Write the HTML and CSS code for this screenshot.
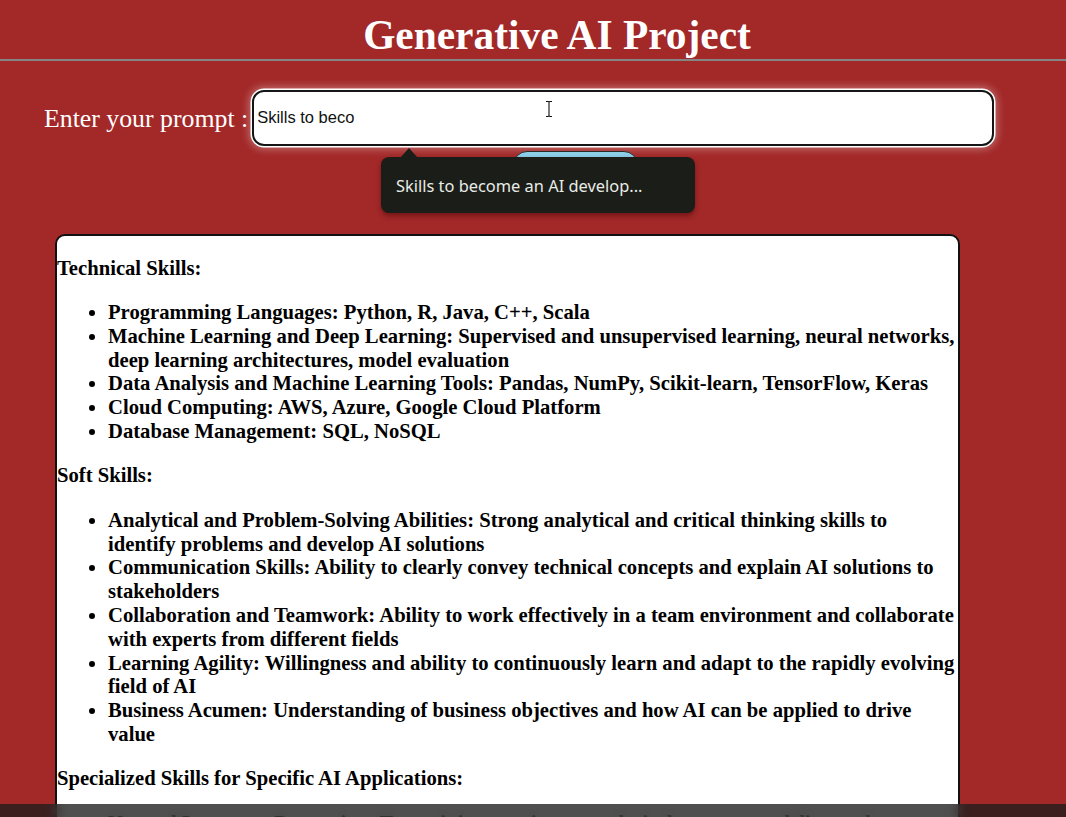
FILE: index.html
```html
<!DOCTYPE html>
<html lang="en">
<head>
<meta charset="utf-8">
<title>Generative AI Project</title>
<link rel="stylesheet" href="styles.css">
</head>
<body>
<header class="page-header">
  <h1 class="title">Generative AI Project</h1>
</header>
<main class="main">
  <form class="prompt-form">
    <div class="prompt-row">
      <label class="prompt-label" for="prompt">Enter your prompt :</label>
      <input class="prompt-input" id="prompt" type="text" value="Skills to beco">
    </div>
    <div class="button-row">
      <button class="submit-btn" type="button">Submit</button>
    </div>
  </form>
  <div class="suggestion">Skills to become an AI develop...</div>
  <svg class="ibeam" width="10" height="18" viewBox="0 0 10 18" aria-hidden="true">
    <path d="M2 1.5h2.2l0.8 0.8 0.8-0.8H8M5 2.3v13.4M2 16.5h2.2l0.8-0.8 0.8 0.8H8" fill="none" stroke="#fff" stroke-width="2.6"/>
    <path d="M2 1.5h2.2l0.8 0.8 0.8-0.8H8M5 2.3v13.4M2 16.5h2.2l0.8-0.8 0.8 0.8H8" fill="none" stroke="#111" stroke-width="1.1"/>
  </svg>
  <section class="response">
    <p class="section-title">Technical Skills:</p>
    <ul class="skill-list">
      <li>Programming Languages: Python, R, Java, C++, Scala</li>
      <li>Machine Learning and Deep Learning: Supervised and unsupervised learning, neural networks, deep learning architectures, model evaluation</li>
      <li>Data Analysis and Machine Learning Tools: Pandas, NumPy, Scikit-learn, TensorFlow, Keras</li>
      <li>Cloud Computing: AWS, Azure, Google Cloud Platform</li>
      <li>Database Management: SQL, NoSQL</li>
    </ul>
    <p class="section-title">Soft Skills:</p>
    <ul class="skill-list">
      <li>Analytical and Problem-Solving Abilities: Strong analytical and critical thinking skills to identify problems and develop AI solutions</li>
      <li>Communication Skills: Ability to clearly convey technical concepts and explain AI solutions to stakeholders</li>
      <li>Collaboration and Teamwork: Ability to work effectively in a team environment and collaborate with experts from different fields</li>
      <li>Learning Agility: Willingness and ability to continuously learn and adapt to the rapidly evolving field of AI</li>
      <li>Business Acumen: Understanding of business objectives and how AI can be applied to drive value</li>
    </ul>
    <p class="section-title">Specialized Skills for Specific AI Applications:</p>
    <ul class="skill-list">
      <li>Natural Language Processing: Text mining, sentiment analysis, language modeling and translation</li>
      <li>Computer Vision: Image recognition, object detection, image segmentation</li>
    </ul>
  </section>
</main>
<div class="bottom-shade"></div>
</body>
</html>
```

FILE: styles.css
```css
html, body {
  height: 100%;
  overflow: hidden;
}

body {
  margin: 0;
  background: #a32828;
  font-family: "Liberation Serif", "Times New Roman", serif;
  color: #000;
}

.page-header {
  border-bottom: 2px solid #858585;
}

.title {
  margin: 0;
  padding: 12px 0 0 48px;
  line-height: 47px;
  font-size: 41.4px;
  font-weight: bold;
  color: #fff;
  text-align: center;
}

.main {
  position: relative;
  padding-top: 29px;
}

.prompt-form {
  margin: 0;
}

.prompt-row {
  display: flex;
  align-items: center;
  gap: 4px;
  padding-left: 44px;
}

.prompt-label {
  color: #fff;
  font-size: 25.8px;
  padding-top: 1px;
}

.prompt-input {
  box-sizing: border-box;
  width: 742px;
  height: 56px;
  margin: 0;
  padding: 0 0 2px 3px;
  border: 2px solid #151515;
  border-radius: 12px;
  background: #fff;
  font-family: "Liberation Sans", Arial, sans-serif;
  font-size: 16.5px;
  color: #111;
  outline: none;
  box-shadow: 0 0 0 1.5px #fff, 0 0 9px 3px rgba(255, 255, 255, 0.35);
}

.button-row {
  display: flex;
  padding-left: 513px;
  margin-top: 5px;
}

.submit-btn {
  width: 125px;
  height: 40px;
  border: 1px solid #2a2a2a;
  border-radius: 14px;
  background: #8ccde8;
  font-family: "Liberation Serif", serif;
  font-size: 18px;
  color: #000;
}

.suggestion {
  position: absolute;
  left: 381px;
  top: 96px;
  box-sizing: border-box;
  width: 314px;
  height: 56px;
  padding: 1px 0 0 15px;
  border-radius: 8px;
  background: #1b1d19;
  color: #e9ece6;
  font-family: "Noto Sans", "Open Sans", sans-serif;
  font-size: 16.4px;
  line-height: 56px;
  white-space: nowrap;
  box-shadow: 0 3px 5px rgba(60, 0, 0, 0.45);
}

.suggestion::before {
  content: "";
  position: absolute;
  left: 19px;
  top: -9px;
  border-left: 9px solid transparent;
  border-right: 9px solid transparent;
  border-bottom: 10px solid #1b1d19;
}

.ibeam {
  position: absolute;
  left: 544px;
  top: 39px;
}

.response {
  box-sizing: border-box;
  width: 905px;
  margin: 43px 0 0 55px;
  border: 2px solid #111;
  border-radius: 10px;
  background: #fff;
  font-size: 20.65px;
  line-height: 23.8px;
  font-weight: bold;
  padding-bottom: 20px;
}

.section-title {
  margin: 20.6px 0;
}

.skill-list {
  margin: 20.6px 0;
  padding: 0 2px 0 51px;
}

.bottom-shade {
  position: fixed;
  left: 0;
  right: 0;
  bottom: 0;
  height: 13px;
  background: rgba(30, 30, 30, 0.78);
  backdrop-filter: blur(6px);
}
```
